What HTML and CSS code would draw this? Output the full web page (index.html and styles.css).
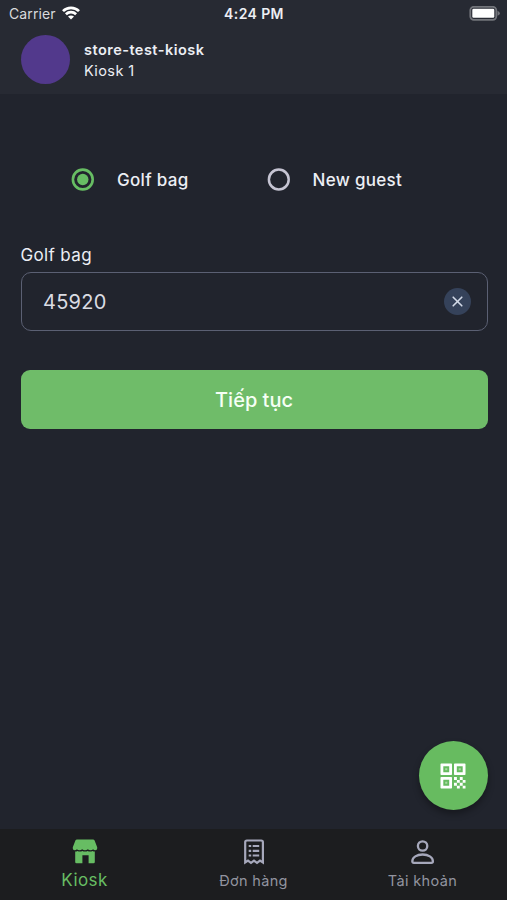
FILE: index.html
```html
<!DOCTYPE html>
<html lang="vi">
<head>
<meta charset="utf-8">
<title>Kiosk</title>
<link rel="stylesheet" href="styles.css">
</head>
<body>
<div class="app">
  <header class="header">
    <div class="status">
      <div class="carrier"><span>Carrier</span>
        <svg width="18" height="14" viewBox="0 0 18 14" fill="none" stroke="#fff" stroke-width="2.7"><path d="M1 5.1C5.4.7 12.6.7 17 5.1M3.9 8.2c2.9-2.8 7.3-2.8 10.2 0"/><path d="M9 13.5 6 10.6c1.7-1.5 4.3-1.5 6 0z" fill="#fff" stroke="none"/></svg>
      </div>
      <time class="clock">4:24 PM</time>
      <svg class="battery" width="31" height="15" viewBox="0 0 31 15"><rect x="1.3" y=".8" width="26" height="13" rx="3.5" fill="none" stroke="#73757b" stroke-width="1.8"/><rect x="3.300" y="2.800" width="22" height="9" rx="1.2" fill="#fff"/><path d="M28.500 4.8q2.400 1 2.400 2.5t-2.400 2.5z" fill="#73757b"/></svg>
    </div>
    <div class="store">
      <div class="avatar"></div>
      <div class="store-text"><strong>store-test-kiosk</strong><span>Kiosk 1</span></div>
    </div>
  </header>
  <main class="main">
    <div class="options">
      <div class="option"><svg class="radio" width="24" height="24" viewBox="0 0 24 24"><circle cx="11.800" cy="11.500" r="9.900" fill="none" stroke="#67bd63" stroke-width="2.600"/><circle cx="11.800" cy="11.500" r="5.700" fill="#67bd63"/></svg><span>Golf bag</span></div>
      <div class="option"><svg class="radio" width="24" height="24" viewBox="0 0 24 24"><circle cx="11.800" cy="11.500" r="9.900" fill="none" stroke="#c5c4d2" stroke-width="2.500"/></svg><span>New guest</span></div>
    </div>
    <div class="label">Golf bag</div>
    <div class="field"><span>45920</span>
      <button class="clear" aria-label="Clear"><svg width="27" height="27" viewBox="0 0 27 27" fill="none" stroke="#d3dae8" stroke-width="1.6" stroke-linecap="round"><path d="m9.2 9.2 8.6 8.6m0-8.6-8.6 8.6"/></svg></button>
    </div>
    <button class="submit"><span>Tiếp tục</span></button>
    <button class="fab" aria-label="QR">
      <svg width="26" height="26" viewBox="0 0 26 26" fill="#fff"><path fill-rule="evenodd" d="M1.2.5h10.1q.7 0 .7.7v10.1q0 .7-.7.7H1.2q-.7 0-.7-.7V1.2q0-.7.7-.7zM3.3 3.3v5.9h5.9V3.3zM14.7.5h10.1q.7 0 .7.7v10.1q0 .7-.7.7H14.7q-.7 0-.7-.7V1.2q0-.7.7-.7zM16.8 3.3v5.9h5.9V3.3zM1.2 14h10.1q.7 0 .7.7v10.1q0 .7-.7.7H1.2q-.7 0-.7-.7V14.7q0-.7.7-.7zM3.3 16.8v5.9h5.9v-5.9z"/><path d="M5.200 5.200h2.100v2.100H5.200zM18.700 5.200h2.100v2.100h-2.100zM5.200 18.700h2.100v2.100H5.200z" fill="#a9daa3"/><path d="M14 14h2.9v2.9H14zM19.8 14h2.9v2.9h-2.9zM16.9 16.9h2.9v2.9h-2.9zM22.7 16.9h2.8v2.9h-2.8zM14 19.8h2.9v2.9H14zM19.8 19.8h2.9v2.9h-2.9zM16.9 22.7h2.9v2.8h-2.9zM22.7 22.7h2.8v2.8h-2.8z"/></svg>
    </button>
  </main>
  <nav class="tabs">
    <div class="tab active">
      <svg width="26" height="26" viewBox="0 0 26 26" fill="#67bd63"><path d="M5 .500h16q1.1 0 1.6 1l2.6 6.700v1.2q0 1.8-1.9 1.8-1.4 0-2.2-1-1 1-2.6 1t-2.6-1q-1.3 1-2.9 1t-2.9-1q-1 1-2.6 1t-2.6-1q-.8 1-2.2 1Q.8 11.200.8 9.400V8.200L3.400 1.500Q3.900.500 5 .500z"/><path d="M3.200 12.600q1.500 0 2.300-.6 1 .6 2.400.6t2.400-.6q1.200.6 2.700.6t2.700-.6q1 .6 2.400.6t2.400-.6q.8.6 2.300.6V23q0 1.300-1.300 1.300h-4.900V16.200H10.400v8.100H4.500q-1.300 0-1.300-1.300z"/></svg>
      <span>Kiosk</span>
    </div>
    <div class="tab">
      <svg width="26" height="26" viewBox="0 0 26 26" fill="none" stroke="#a6a8bb" stroke-width="2.200"><path d="M4.200 23.500V3.200q0-1.700 1.700-1.700h14.300q1.700 0 1.700 1.700V23.500l-2.900-1.900-3 2.300-3-2.300-3 2.300-3-2.300z"/><path d="M7.700 7h2.500M11.700 7h6.500M7.700 11.800h2.500M11.700 11.800h6.500M7.700 16.500h2.500M11.700 16.500h6.500"/></svg>
      <span>Đơn hàng</span>
    </div>
    <div class="tab">
      <svg width="26" height="26" viewBox="0 0 26 26" fill="none" stroke="#a6a8bb" stroke-width="2.300"><circle cx="12.600" cy="7" r="4.700"/><path d="M3.800 23.800q-1.500 0-1.500-1.500c0-4 4.600-6.800 10.300-6.800s10.300 2.800 10.300 6.800q0 1.500-1.500 1.500z"/></svg>
      <span>Tài khoản</span>
    </div>
  </nav>
</div>
</body>
</html>
```
FILE: styles.css
```css
* { box-sizing: border-box; }
body { margin: 0; background: #21242d; color: #eceef4; font-family: Inter, "Liberation Sans", sans-serif; }
button { font: inherit; border: 0; padding: 0; }
svg { display: block; }
.app { width: 507px; height: 900px; display: flex; flex-direction: column; }
.header { height: 94px; background: #272a33; }
.status { height: 28px; padding: 0 7px 2px 9px; display: grid; grid-template-columns: 1fr auto 1fr; align-items: center; }
.carrier { display: flex; align-items: center; gap: 6px; font-size: 14px; letter-spacing: .1px; color: #d9dadd; }
.carrier svg { margin-top: -1px; }
.clock { font-size: 14px; font-weight: 600; letter-spacing: .4px; margin-right: 1px; }
.battery { justify-self: end; }
.store { display: flex; align-items: center; gap: 14.5px; padding: 7px 20.5px 0; }
.avatar { width: 49px; height: 49px; border-radius: 50%; background: #52398c; }
.store-text { display: flex; flex-direction: column; font-size: 14.5px; line-height: 21px; letter-spacing: .4px; }
.store-text strong { font-weight: 600; letter-spacing: .48px; }
.main { flex: 1; position: relative; padding: 74px 19.500px 0 20.500px; }
.options { display: flex; padding-left: 50.5px; }
.option { display: flex; align-items: center; gap: 22px; width: 195.500px; height: 24px; font-size: 17px; font-weight: 500; letter-spacing: .3px; white-space: nowrap; }
.radio { flex: none; }
.label { margin-top: 52px; height: 28px; line-height: 22px; font-size: 17px; letter-spacing: .35px; }
.field { height: 59px; border: 1.500px solid #5b6073; border-radius: 10px; padding: 0 15.500px 0 21.500px; display: flex; align-items: center; justify-content: space-between; font-size: 20px; letter-spacing: .25px; color: #dadce3; }
.clear { width: 27px; height: 27px; border-radius: 50%; background: #35425a; }
.submit { display: block; width: 100%; height: 59px; margin-top: 39px; border-radius: 9px; background: #6fbc69; color: #f6fff5; font-size: 20px; font-weight: 500; }
.fab { position: absolute; right: 19.500px; bottom: 19px; width: 69px; height: 69px; border-radius: 50%; background: #67bb60; display: grid; place-items: center; box-shadow: 0 4px 7px #0005; }
.fab svg { margin-right: 1px; }
.tabs { height: 71px; background: #1c1d1f; display: grid; grid-template-columns: repeat(3, 1fr); color: #92949f; }
.tab { display: flex; flex-direction: column; align-items: center; padding-top: 10px; font-size: 14.500px; line-height: 20px; letter-spacing: .35px; gap: 6px; }
.active { color: #67bd63; font-size: 17px; letter-spacing: .4px; gap: 5px; }
```
